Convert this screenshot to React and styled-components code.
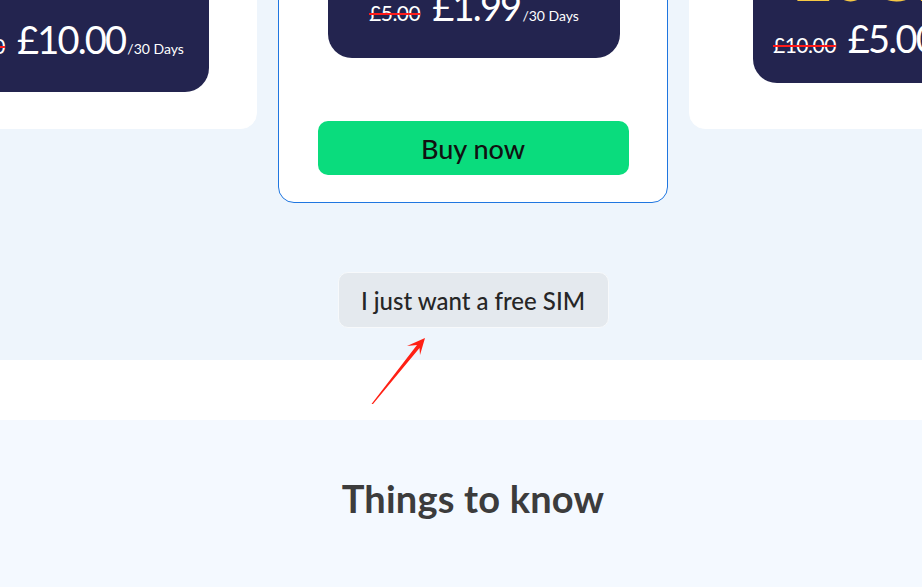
import React from 'react';
import styled, { createGlobalStyle } from 'styled-components';

const GlobalStyle = createGlobalStyle`
  html, body {
    margin: 0;
    padding: 0;
    overflow: hidden;
    font-family: 'Lato', 'Noto Sans', sans-serif;
  }
`;

const Page = styled.div`
  position: relative;
  width: 922px;
  height: 587px;
  overflow: hidden;
  background: #ffffff;
`;

const PlansSection = styled.section`
  height: 360px;
  background: #eef5fc;
  display: flex;
  flex-direction: column;
  align-items: center;
  overflow: hidden;
`;

const CardRow = styled.div`
  width: 100%;
  display: flex;
  justify-content: center;
  align-items: flex-start;
  gap: 21px;
  margin-top: -200px;
  padding-left: 24px;
  box-sizing: border-box;
`;

const Card = styled.div`
  flex: 0 0 390px;
  box-sizing: border-box;
  background: #ffffff;
  border-radius: 16px;
  border: 1px solid ${(p) => (p.$featured ? '#1f76e0' : '#ffffff')};
  padding: 20px 0 ${(p) => p.$bottom}px;
  display: flex;
  flex-direction: column;
`;

const Panel = styled.div`
  box-sizing: border-box;
  width: 292px;
  height: ${(p) => p.$h}px;
  margin-left: ${(p) => p.$inset}px;
  background: #23244f;
  border-radius: 24px;
  display: flex;
  flex-direction: column;
  justify-content: flex-end;
  align-items: ${(p) => (p.$left ? 'flex-start' : 'center')};
  padding: 0 0 ${(p) => p.$pb}px ${(p) => (p.$left ? 20 : 0)}px;
  overflow: hidden;
`;

const Headline = styled.div`
  color: #f6c844;
  font-size: 64px;
  font-weight: 700;
  line-height: 1;
  margin: 0 0 10px 22px;
`;

const PriceLine = styled.div`
  display: flex;
  align-items: baseline;
  color: #ffffff;
  white-space: nowrap;
`;

const OldPrice = styled.span`
  font-size: 21px;
  margin-right: 12px;
  letter-spacing: -0.5px;
  text-decoration: line-through;
  text-decoration-color: #ff1a1a;
  text-decoration-thickness: 2px;
`;

const NewPrice = styled.span`
  font-size: 38px;
  letter-spacing: -1.8px;
  line-height: 1;
`;

const Period = styled.span`
  font-size: 14px;
  margin-left: 2px;
`;

const BuyButton = styled.button`
  align-self: center;
  margin-top: 63px;
  width: 311px;
  height: 54px;
  border: none;
  border-radius: 10px;
  background: #0adc7d;
  color: #111111;
  font-family: 'Lato', 'Noto Sans', sans-serif;
  font-size: 27px;
  font-weight: 500;
  cursor: pointer;
`;

const FreeSimButton = styled.button`
  margin-top: 69px;
  margin-left: 24px;
  width: 271px;
  height: 56px;
  box-sizing: border-box;
  border: 1px solid #f7f9fb;
  border-radius: 10px;
  background: #e4e9ee;
  color: #262626;
  font-family: 'Lato', 'Noto Sans', sans-serif;
  font-size: 24px;
  font-weight: 500;
  cursor: pointer;
`;

const Arrow = styled.svg`
  position: absolute;
  left: 366px;
  top: 334px;
  width: 64px;
  height: 74px;
  overflow: visible;
`;

const Band = styled.div`
  height: 60px;
  background: #ffffff;
`;

const InfoSection = styled.section`
  height: 167px;
  background: #f4f9ff;
  display: flex;
  justify-content: center;
  padding-top: 55px;
  box-sizing: border-box;
`;

const Title = styled.h2`
  margin: 0 0 0 24px;
  font-family: 'Lato', 'Noto Sans', sans-serif;
  font-size: 38px;
  font-weight: 700;
  color: #3c3c3c;
  letter-spacing: 0.2px;
`;

const plans = [
  { old: '£20.00', price: '£10.00', h: 271, pb: 34, inset: 49, bottom: 36 },
  { old: '£5.00', price: '£1.99', h: 237, pb: 33, inset: 49, bottom: 27, featured: true },
  { old: '£10.00', price: '£5.00', h: 262, pb: 26, inset: 63, bottom: 45, headline: '20GB', left: true },
];

export default function App() {
  return (
    <Page>
      <GlobalStyle />
      <PlansSection>
        <CardRow>
          {plans.map((p) => (
            <Card key={p.price} $featured={p.featured} $bottom={p.bottom}>
              <Panel $h={p.h} $pb={p.pb} $inset={p.inset} $left={p.left}>
                {p.headline && <Headline>{p.headline}</Headline>}
                <PriceLine>
                  <OldPrice>{p.old}</OldPrice>
                  <NewPrice>{p.price}</NewPrice>
                  <Period>/30 Days</Period>
                </PriceLine>
              </Panel>
              {p.featured && <BuyButton>Buy now</BuyButton>}
            </Card>
          ))}
        </CardRow>
        <FreeSimButton>I just want a free SIM</FreeSimButton>
      </PlansSection>
      <Band />
      <InfoSection>
        <Title>Things to know</Title>
      </InfoSection>
      <Arrow viewBox="0 0 64 74">
        <polygon points="59,4 54,21 53.5,14 7,70 5.5,70 51,11 41,12" fill="#ff2014" />
      </Arrow>
    </Page>
  );
}
